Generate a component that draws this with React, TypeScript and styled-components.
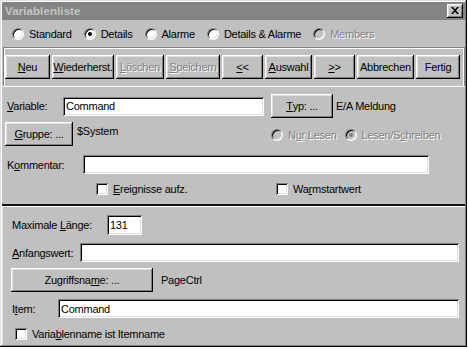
import React from "react";
import styled, { createGlobalStyle, css } from "styled-components";

const Global = createGlobalStyle`
  html, body { margin: 0; padding: 0; background: #fff; }
  body { font-family: "Liberation Sans", Arial, sans-serif; font-size: 11px; letter-spacing: -0.25px; color: #000; }
  * { box-sizing: border-box; }
`;

const disabledText = css`
  color: #808080;
  text-shadow: 1px 1px 0 #fff;
`;

const raised = css`
  box-shadow: inset -1px -1px #000, inset 1px 1px #fff, inset -2px -2px #808080, inset 2px 2px #dfdfdf;
`;

const sunken = css`
  box-shadow: inset 1px 1px #808080, inset -1px -1px #fff, inset 2px 2px #000, inset -2px -2px #dfdfdf;
`;

const Window = styled.div`
  width: 467px;
  height: 347px;
  background: #c0c0c0;
  padding: 2px;
  box-shadow: inset -1px -1px #000, inset 1px 1px #dfdfdf, inset -2px -2px #808080, inset 2px 2px #fff;
  display: flex;
  flex-direction: column;
`;

const TitleBar = styled.div`
  height: 18px;
  background: #848484;
  display: flex;
  align-items: center;
  padding: 0 2px 0 3px;
`;

const TitleText = styled.span`
  font-weight: bold;
  font-size: 11.5px;
  color: #c4c4c4;
  letter-spacing: 0.1px;
`;

const CloseButton = styled.div`
  margin-left: auto;
  width: 16px;
  height: 14px;
  background: #c0c0c0;
  ${raised};
  display: flex;
  align-items: center;
  justify-content: center;
  padding-bottom: 1px;
`;

const Acc = styled.u`
  text-decoration: underline;
  text-underline-offset: 1px;
`;

const RadioRow = styled.div`
  height: 27px;
  display: flex;
  align-items: center;
  padding-left: 10px;
  gap: 12px;
`;

const RadioItem = styled.label`
  display: flex;
  align-items: center;
  gap: 5px;
  white-space: nowrap;
`;

const RadioCircle = styled.span<{ $checked?: boolean; $disabled?: boolean }>`
  position: relative;
  width: 12px;
  height: 12px;
  border-radius: 50%;
  background: ${(p) => (p.$disabled ? "#c0c0c0" : "#fff")};
  border: 1px solid;
  border-color: #808080 #fff #fff #808080;
  box-shadow: inset 1px 1px #000, inset -1px -1px #dfdfdf;
  flex: none;
  ${(p) =>
    p.$checked &&
    css`
      &::after {
        content: "";
        position: absolute;
        left: 3px;
        top: 3px;
        width: 4px;
        height: 4px;
        border-radius: 50%;
        background: ${p.$disabled ? "#808080" : "#000"};
      }
    `}
`;

const ItemText = styled.span<{ $disabled?: boolean }>`
  ${(p) => p.$disabled && disabledText};
`;

const ButtonFrame = styled.div`
  margin-left: 1px;
  height: 39px;
  border-top: 1px solid #808080;
  border-left: 1px solid #808080;
  border-right: 1px solid #808080;
  box-shadow: inset 1px 1px #fff, inset -1px 0 #fff;
  padding: 7px 0 0 1px;
  display: flex;
  gap: 2px;
`;

const Button = styled.div<{ $w: number; $disabled?: boolean }>`
  width: ${(p) => p.$w}px;
  height: 24px;
  flex: none;
  background: #c0c0c0;
  ${raised};
  display: flex;
  align-items: center;
  justify-content: center;
  white-space: nowrap;
  ${(p) => p.$disabled && disabledText};
`;

const UpperPanel = styled.div`
  box-shadow: inset 0 1px #fff;
  border-bottom: 2px solid #111;
  padding: 8px 0 9px 5px;
  display: flex;
  flex-direction: column;
`;

const LowerPanel = styled.div`
  flex: 1;
  box-shadow: inset 0 1px #fff, inset 1px 0 #e0e0e0;
  padding: 9px 6px 0 10px;
  display: flex;
  flex-direction: column;
`;

const Row = styled.div<{ $mt?: number; $h?: number }>`
  display: flex;
  align-items: center;
  margin-top: ${(p) => p.$mt ?? 0}px;
  height: ${(p) => (p.$h ? `${p.$h}px` : "auto")};
`;

const Label = styled.span<{ $w?: number }>`
  width: ${(p) => (p.$w ? `${p.$w}px` : "auto")};
  flex: none;
  white-space: nowrap;
`;

const TextInput = styled.input<{ $w?: number; $h: number }>`
  border: none;
  outline: none;
  margin: 0;
  background: #fff;
  ${sunken};
  font: inherit;
  letter-spacing: inherit;
  color: #000;
  padding: 0 3px;
  height: ${(p) => p.$h}px;
  ${(p) => (p.$w ? `width: ${p.$w}px; flex: none;` : "flex: 1; min-width: 0;")}
`;

const PlainText = styled.span<{ $ml?: number; $top?: boolean }>`
  margin-left: ${(p) => p.$ml ?? 0}px;
  white-space: nowrap;
  ${(p) =>
    p.$top &&
    css`
      align-self: flex-start;
      padding-top: 3px;
    `}
`;

const LeftCell = styled.div<{ $w: number; $ml?: number }>`
  width: ${(p) => p.$w}px;
  margin-left: ${(p) => p.$ml ?? 0}px;
  height: 100%;
  display: flex;
  align-items: center;
  flex: none;
`;

const RadioGroup = styled.div`
  display: flex;
  align-items: center;
  gap: 8px;
  margin-top: 2px;
`;

const CheckItem = styled.label<{ $ml?: number; $w?: number }>`
  display: flex;
  align-items: center;
  gap: 5px;
  margin-left: ${(p) => p.$ml ?? 0}px;
  width: ${(p) => (p.$w ? `${p.$w}px` : "auto")};
  flex: none;
  white-space: nowrap;
`;

const CheckBox = styled.span`
  width: 12px;
  height: 12px;
  flex: none;
  background: #fff;
  ${sunken};
`;

const Gap = styled.span<{ $w: number }>`
  width: ${(p) => p.$w}px;
  flex: none;
`;

const CloseIcon = () => (
  <svg width="8" height="7" viewBox="0 0 8 7">
    <path d="M0 0h2l2 2.2L6 0h2L5 3.5 8 7H6L4 4.8 2 7H0l3-3.5z" fill="#000" />
  </svg>
);

export default function App() {
  return (
    <>
      <Global />
      <Window>
        <TitleBar>
          <TitleText>Variablenliste</TitleText>
          <CloseButton>
            <CloseIcon />
          </CloseButton>
        </TitleBar>

        <RadioRow>
          <RadioItem>
            <RadioCircle />
            <ItemText>Standard</ItemText>
          </RadioItem>
          <RadioItem>
            <RadioCircle $checked />
            <ItemText>Details</ItemText>
          </RadioItem>
          <RadioItem>
            <RadioCircle />
            <ItemText>Alarme</ItemText>
          </RadioItem>
          <RadioItem>
            <RadioCircle />
            <ItemText>Details &amp; Alarme</ItemText>
          </RadioItem>
          <RadioItem>
            <RadioCircle $disabled />
            <ItemText $disabled>Members</ItemText>
          </RadioItem>
        </RadioRow>

        <ButtonFrame>
          <Button $w={45}>
            <Acc>N</Acc>eu
          </Button>
          <Button $w={62}>
            <Acc>W</Acc>iederherst.
          </Button>
          <Button $w={48} $disabled>
            <Acc>L</Acc>öschen
          </Button>
          <Button $w={54} $disabled>
            <Acc>S</Acc>peichern
          </Button>
          <Button $w={41}>
            <Acc>&lt;</Acc>&lt;
          </Button>
          <Button $w={47}>
            <Acc>A</Acc>uswahl
          </Button>
          <Button $w={41}>
            <Acc>&gt;</Acc>&gt;
          </Button>
          <Button $w={57}>Abbrechen</Button>
          <Button $w={44}>Fertig</Button>
        </ButtonFrame>

        <UpperPanel>
          <Row $h={24}>
            <Label $w={56}>
              <Acc>V</Acc>ariable:
            </Label>
            <TextInput $w={201} $h={19} value="Command" readOnly />
            <Gap $w={7} />
            <Button $w={62}>
              <Acc>T</Acc>yp: ...
            </Button>
            <PlainText $ml={3}>E/A Meldung</PlainText>
          </Row>
          <Row $h={24} $mt={4}>
            <LeftCell $w={266} $ml={-2}>
              <Button $w={68}>
                <Acc>G</Acc>ruppe: ...
              </Button>
              <PlainText $ml={4} $top>
                $System
              </PlainText>
            </LeftCell>
            <RadioGroup>
              <RadioItem>
                <RadioCircle $disabled />
                <ItemText $disabled>
                  N<Acc>u</Acc>r Lesen
                </ItemText>
              </RadioItem>
              <RadioItem>
                <RadioCircle $disabled $checked />
                <ItemText $disabled>
                  Lesen/S<Acc>c</Acc>hreiben
                </ItemText>
              </RadioItem>
            </RadioGroup>
          </Row>
          <Row $mt={9}>
            <Label $w={76}>
              K<Acc>o</Acc>mmentar:
            </Label>
            <TextInput $w={346} $h={19} value="" readOnly />
          </Row>
          <Row $mt={8} $h={13}>
            <CheckItem $ml={89} $w={180}>
              <CheckBox />
              <span>
                <Acc>E</Acc>reignisse aufz.
              </span>
            </CheckItem>
            <CheckItem>
              <CheckBox />
              <span>
                Wa<Acc>r</Acc>mstartwert
              </span>
            </CheckItem>
          </Row>
        </UpperPanel>

        <LowerPanel>
          <Row>
            <Label $w={95}>
              Maximale <Acc>L</Acc>änge:
            </Label>
            <TextInput $w={35} $h={20} value="131" readOnly />
          </Row>
          <Row $mt={8}>
            <Label $w={68}>
              <Acc>A</Acc>nfangswert:
            </Label>
            <TextInput $h={19} value="" readOnly />
          </Row>
          <Row $mt={6} $h={24}>
            <LeftCell $w={150} $ml={-1}>
              <Button $w={142}>
                Zugriffsna<Acc>m</Acc>e: ...
              </Button>
            </LeftCell>
            <PlainText>PageCtrl</PlainText>
          </Row>
          <Row $mt={7}>
            <Label $w={46}>
              I<Acc>t</Acc>em:
            </Label>
            <TextInput $h={19} value="Command" readOnly />
          </Row>
          <Row $mt={9} $h={13}>
            <CheckItem $ml={3}>
              <CheckBox />
              <span>
                Varia<Acc>b</Acc>lenname ist Itemname
              </span>
            </CheckItem>
          </Row>
        </LowerPanel>
      </Window>
    </>
  );
}
